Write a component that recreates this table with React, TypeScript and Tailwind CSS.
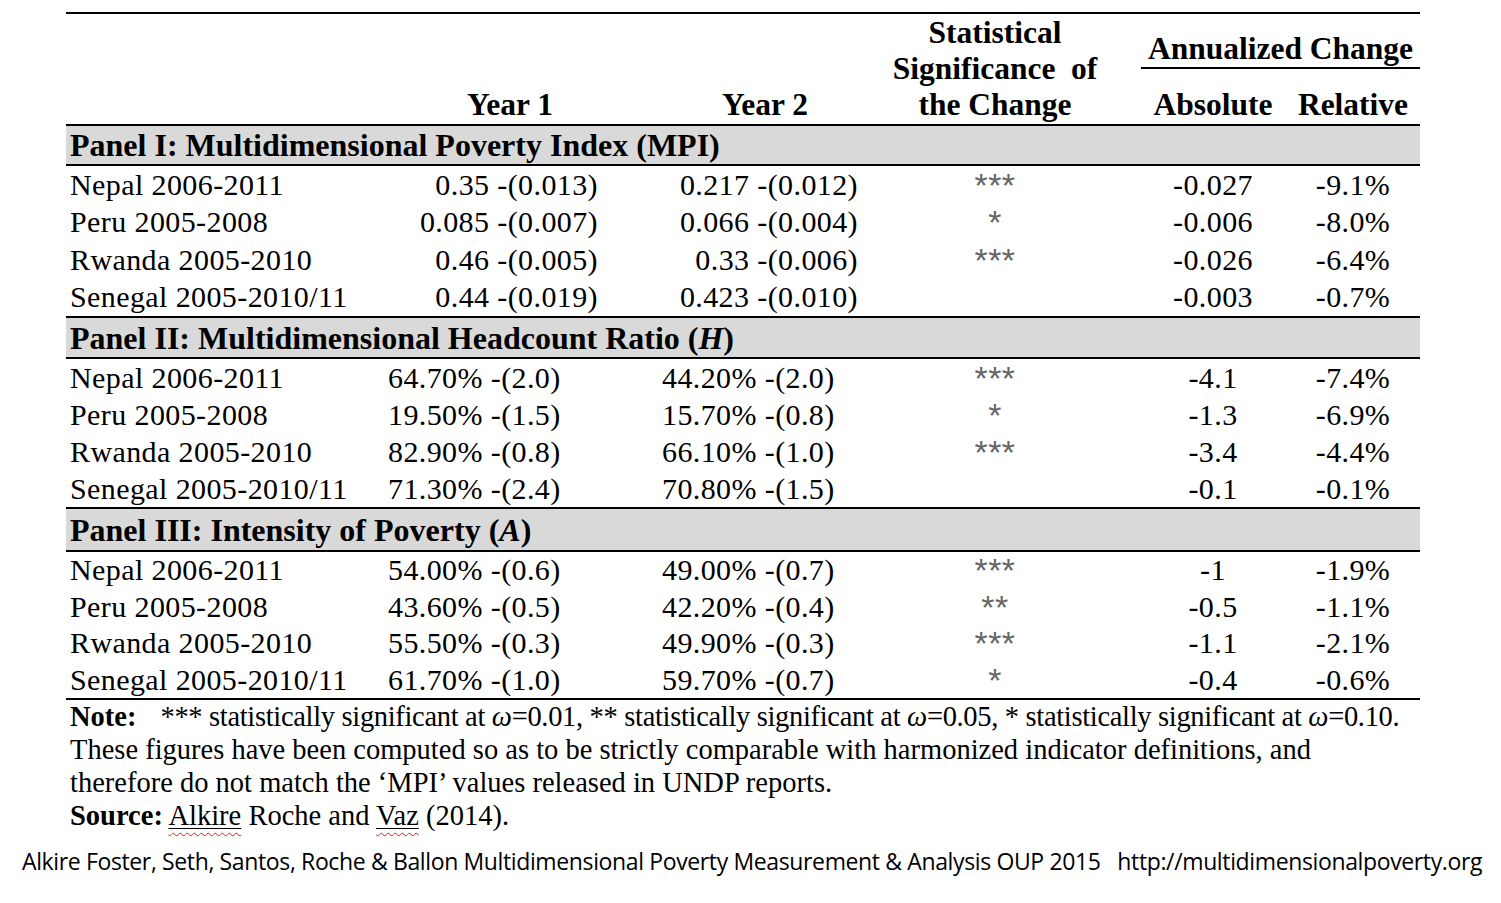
import React from "react";

type Row = { label: string; y1: string; y2: string; sig: string; abs: string; rel: string };

const panels: {
  title: React.ReactNode;
  band: string;
  rowH: string;
  rightAlign: boolean;
  rows: Row[];
}[] = [
  {
    title: <>Panel I: Multidimensional Poverty Index (MPI)</>,
    band: "h-[40px]",
    rowH: "h-[37.5px]",
    rightAlign: true,
    rows: [
      { label: "Nepal 2006-2011", y1: "0.35 -(0.013)", y2: "0.217 -(0.012)", sig: "***", abs: "-0.027", rel: "-9.1%" },
      { label: "Peru 2005-2008", y1: "0.085 -(0.007)", y2: "0.066 -(0.004)", sig: "*", abs: "-0.006", rel: "-8.0%" },
      { label: "Rwanda 2005-2010", y1: "0.46 -(0.005)", y2: "0.33 -(0.006)", sig: "***", abs: "-0.026", rel: "-6.4%" },
      { label: "Senegal 2005-2010/11", y1: "0.44 -(0.019)", y2: "0.423 -(0.010)", sig: "", abs: "-0.003", rel: "-0.7%" },
    ],
  },
  {
    title: (
      <>
        Panel II: Multidimensional Headcount Ratio (<i>H</i>)
      </>
    ),
    band: "h-[41px]",
    rowH: "h-[37px]",
    rightAlign: false,
    rows: [
      { label: "Nepal 2006-2011", y1: "64.70% -(2.0)", y2: "44.20% -(2.0)", sig: "***", abs: "-4.1", rel: "-7.4%" },
      { label: "Peru 2005-2008", y1: "19.50% -(1.5)", y2: "15.70% -(0.8)", sig: "*", abs: "-1.3", rel: "-6.9%" },
      { label: "Rwanda 2005-2010", y1: "82.90% -(0.8)", y2: "66.10% -(1.0)", sig: "***", abs: "-3.4", rel: "-4.4%" },
      { label: "Senegal 2005-2010/11", y1: "71.30% -(2.4)", y2: "70.80% -(1.5)", sig: "", abs: "-0.1", rel: "-0.1%" },
    ],
  },
  {
    title: (
      <>
        Panel III: Intensity of Poverty (<i>A</i>)
      </>
    ),
    band: "h-[43px]",
    rowH: "h-[36.5px]",
    rightAlign: false,
    rows: [
      { label: "Nepal 2006-2011", y1: "54.00% -(0.6)", y2: "49.00% -(0.7)", sig: "***", abs: "-1", rel: "-1.9%" },
      { label: "Peru 2005-2008", y1: "43.60% -(0.5)", y2: "42.20% -(0.4)", sig: "**", abs: "-0.5", rel: "-1.1%" },
      { label: "Rwanda 2005-2010", y1: "55.50% -(0.3)", y2: "49.90% -(0.3)", sig: "***", abs: "-1.1", rel: "-2.1%" },
      { label: "Senegal 2005-2010/11", y1: "61.70% -(1.0)", y2: "59.70% -(0.7)", sig: "*", abs: "-0.4", rel: "-0.6%" },
    ],
  },
];

const cols = "grid grid-cols-[318px_274px_202px_270px_156px_134px]";

function Stars({ s }: { s: string }) {
  return (
    <span className="inline-block font-['Liberation_Sans',sans-serif] text-[34px] leading-[20px] h-[20px] text-[#666] relative top-[2px]">
      {s}
    </span>
  );
}

export default function App() {
  return (
    <div className="w-[1501px] h-[903px] bg-white text-black font-['Liberation_Serif',serif] overflow-hidden">
      <div className="ml-[66px] mt-[12px] w-[1354px]">
        {/* Header */}
        <div className={`${cols} border-t-2 border-b-2 border-black h-[114px] font-bold text-[31.5px] leading-[36px]`}>
          <div />
          <div className="flex items-end justify-center pr-[22px] pb-[1px]">Year 1</div>
          <div className="flex items-end justify-center pl-[12px] pb-[1px]">Year 2</div>
          <div className="flex flex-col items-center justify-end pb-[1px]">
            <div>Statistical</div>
            <div className="whitespace-pre">Significance  of</div>
            <div>the Change</div>
          </div>
          <div className="col-span-2 flex flex-col justify-end pb-[1px]">
            <div className="ml-[11px] text-center border-b-2 border-black leading-[36px] mb-[18px] whitespace-nowrap">
              Annualized Change
            </div>
            <div className="grid grid-cols-[156px_134px]">
              <div className="text-center pl-[10px]">Absolute</div>
              <div className="text-center">Relative</div>
            </div>
          </div>
        </div>

        {panels.map((p, pi) => (
          <div key={pi}>
            <div
              className={`${p.band} bg-[#d9d9d9] border-b-2 border-black flex items-center pl-[4px] font-bold text-[32px] whitespace-nowrap`}
            >
              <span>{p.title}</span>
            </div>
            <div className="border-b-2 border-black">
              {p.rows.map((r, ri) => (
                <div key={ri} className={`${cols} ${p.rowH} items-center text-[30px] tracking-[0.4px] leading-none`}>
                  <div className="pl-[4px] whitespace-nowrap">{r.label}</div>
                  <div className={p.rightAlign ? "text-right pr-[60px] whitespace-nowrap" : "pl-[4px] whitespace-nowrap"}>
                    {r.y1}
                  </div>
                  <div className={p.rightAlign ? "text-right pr-[2px] whitespace-nowrap" : "pl-[4px] whitespace-nowrap"}>
                    {r.y2}
                  </div>
                  <div className="text-center">
                    <Stars s={r.sig} />
                  </div>
                  <div className="text-center pl-[10px]">{r.abs}</div>
                  <div className="text-center">{r.rel}</div>
                </div>
              ))}
            </div>
          </div>
        ))}

        {/* Notes */}
        <div className="pl-[4px] text-[28.5px] leading-[33px]">
          <div className="whitespace-nowrap">
            <b>Note:</b>
            <span className="ml-[24px] tracking-[-0.32px]">
              *** statistically significant at <i>ω</i>=0.01, ** statistically significant at <i>ω</i>=0.05, *
              statistically significant at <i>ω</i>=0.10.
            </span>
          </div>
          <div className="whitespace-nowrap">
            These figures have been computed so as to be strictly comparable with harmonized indicator definitions, and
          </div>
          <div className="whitespace-nowrap">therefore do not match the ‘MPI’ values released in UNDP reports.</div>
          <div className="whitespace-nowrap">
            <b>Source:</b>{" "}
            <span className="underline decoration-wavy decoration-[#e02020] underline-offset-[7px] decoration-[1px]">
              <span className="underline decoration-black underline-offset-[3px] decoration-[1px]">Alkire</span>
            </span>{" "}
            Roche and{" "}
            <span className="underline decoration-wavy decoration-[#e02020] underline-offset-[7px] decoration-[1px]">
              <span className="underline decoration-black underline-offset-[3px] decoration-[1px]">Vaz</span>
            </span>{" "}
            (2014).
          </div>
        </div>
      </div>

      {/* Footer */}
      <div className="ml-[22px] mt-[14px] whitespace-pre font-['Open_Sans',sans-serif] text-[23px] leading-[30px] tracking-[-0.37px]">
        Alkire Foster, Seth, Santos, Roche &amp; Ballon Multidimensional Poverty Measurement &amp; Analysis OUP 2015   http://multidimensionalpoverty.org
      </div>
    </div>
  );
}
